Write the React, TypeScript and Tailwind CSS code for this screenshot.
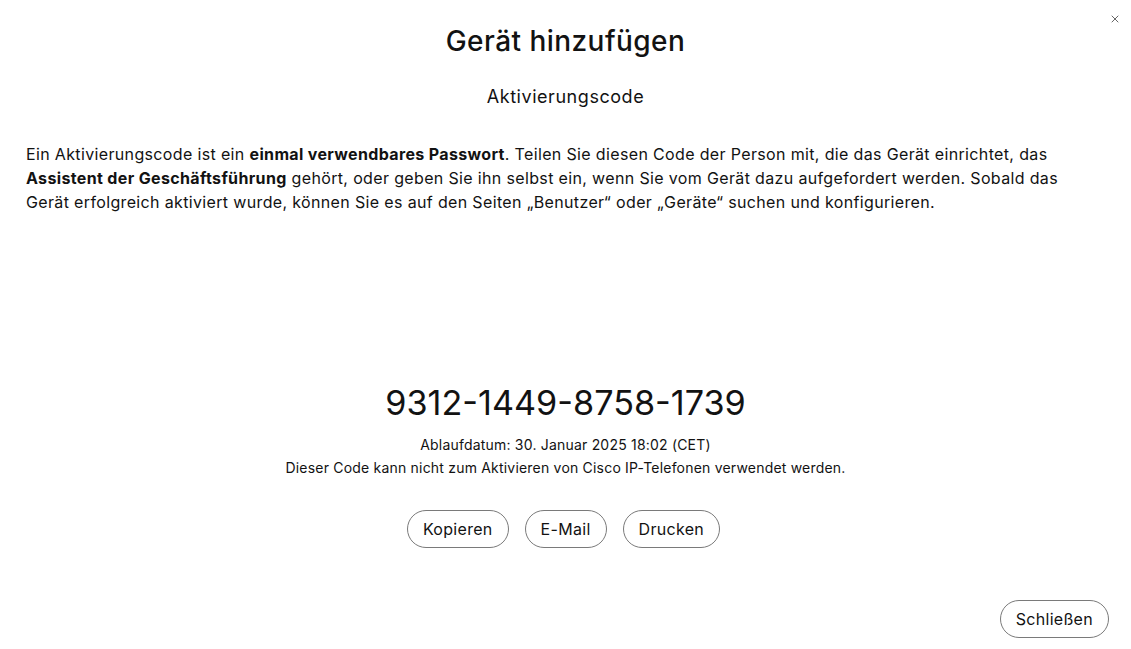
import { X } from "lucide-react";

const actions = ["Kopieren", "E-Mail", "Drucken"];

export default function App() {
  return (
    <div
      className="relative flex h-[649px] w-full flex-col bg-white text-[#121212]"
      style={{ fontFamily: "Inter, 'Noto Sans', sans-serif" }}
    >
      {/* close icon */}
      <button className="absolute right-[10px] top-[13px] flex h-[12px] w-[12px] items-center justify-center text-[#333]">
        <X size={12} strokeWidth={1.5} />
      </button>

      <div className="flex flex-col items-center pt-[23px]">
        <h1 className="text-[28px] leading-[36px] font-medium tracking-[0.45px]">Gerät hinzufügen</h1>
        <h2 className="mt-[24px] text-[18px] leading-[28px] tracking-[0.55px]">Aktivierungscode</h2>
      </div>

      <p className="mt-[31px] px-[26px] text-[16px] leading-[24px] tracking-[0.35px]">
        Ein Aktivierungscode ist ein <b className="font-bold">einmal verwendbares Passwort</b>. Teilen Sie
        diesen Code der Person mit, die das Gerät einrichtet, das
        <br />
        <b className="font-bold">Assistent der Geschäftsführung</b> gehört, oder geben Sie ihn selbst ein,
        wenn Sie vom Gerät dazu aufgefordert werden. Sobald das
        <br />
        Gerät erfolgreich aktiviert wurde, können Sie es auf den Seiten „Benutzer“ oder „Geräte“ suchen und
        konfigurieren.
      </p>

      <div className="mt-[167px] flex flex-col items-center">
        <div className="text-[34.2px] leading-[44px]">9312-1449-8758-1739</div>
        <div className="mt-[8px] text-[14px] leading-[23px] tracking-[0.2px]">
          Ablaufdatum: 30. Januar 2025 18:02 (CET)
        </div>
        <div className="text-[14px] leading-[23px] tracking-[0.2px]">
          Dieser Code kann nicht zum Aktivieren von Cisco IP-Telefonen verwendet werden.
        </div>

        <div className="mt-[31px] flex gap-[16px] pr-[4px]">
          {actions.map((a) => (
            <button
              key={a}
              className="h-[38px] rounded-full border border-[#7a7a7a] px-[15px] text-[16px] leading-none tracking-[0.3px]"
            >
              {a}
            </button>
          ))}
        </div>
      </div>

      <div className="mt-auto flex justify-end pb-[11px] pr-[22px]">
        <button className="h-[38px] rounded-full border border-[#7a7a7a] px-[15px] text-[16px] leading-none tracking-[0.3px]">
          Schließen
        </button>
      </div>
    </div>
  );
}
